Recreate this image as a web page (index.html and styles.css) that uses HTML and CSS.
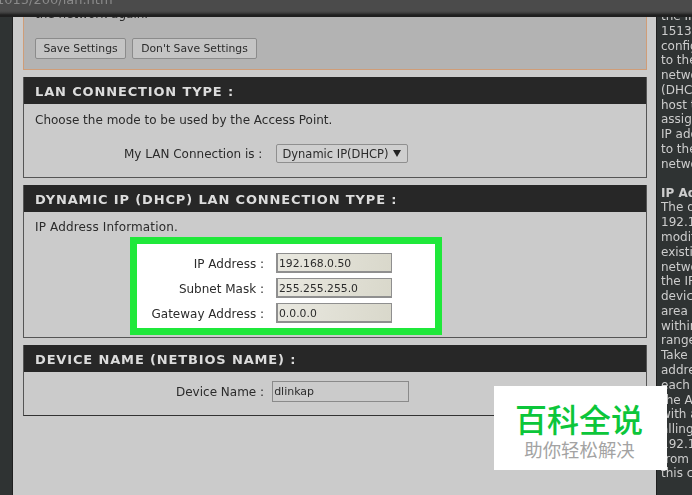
FILE: index.html
```html
<!DOCTYPE html>
<html lang="en">
<head>
<meta charset="utf-8">
<title>LAN settings</title>
<link rel="stylesheet" href="styles.css">
</head>
<body>
<div class="screen">
  <header class="urlbar"><span class="url">1015/200/lan.htm</span></header>
  <div class="workspace">
    <div class="gutter"></div>
    <main class="main">
      <section class="notice">
        <p class="clipped">the network again.</p>
        <div class="buttons">
          <button class="btn btn-save">Save Settings</button>
          <button class="btn btn-nosave">Don't Save Settings</button>
        </div>
      </section>

      <section class="panel panel-lan">
        <h2 class="panel-title">LAN CONNECTION TYPE :</h2>
        <p class="panel-text">Choose the mode to be used by the Access Point.</p>
        <div class="lan-row">
          <span class="label">My LAN Connection is :</span>
          <div class="select"><span>Dynamic IP(DHCP)</span><span class="arrow"></span></div>
        </div>
      </section>

      <section class="panel panel-dhcp">
        <h2 class="panel-title">DYNAMIC IP (DHCP) LAN CONNECTION TYPE :</h2>
        <p class="panel-text">IP Address Information.</p>
        <div class="highlight">
          <span class="label">IP Address :</span><div class="field">192.168.0.50</div>
          <span class="label">Subnet Mask :</span><div class="field">255.255.255.0</div>
          <span class="label">Gateway Address :</span><div class="field">0.0.0.0</div>
        </div>
      </section>

      <section class="panel panel-device">
        <h2 class="panel-title">DEVICE NAME (NETBIOS NAME) :</h2>
        <div class="device-row">
          <span class="label">Device Name :</span>
          <div class="field field-device">dlinkap</div>
        </div>
      </section>
    </main>
    <aside class="help">
      <p class="help-clip">the IP</p>
      <p>1513<br>config<br>to the<br>netwo<br>(DHCP<br>host t<br>assign<br>IP add<br>to the<br>netwo</p>
      <h3>IP Ad</h3>
      <p>The d<br>192.16<br>modif<br>existin<br>netwo<br>the IP<br>device<br>area r<br>within<br>range<br>Take o<br>addre<br>each s<br>the AI<br>with a<br>alling<br>192.16<br>from 1<br>this ca</p>
    </aside>
  </div>
  <div class="watermark">
    <div class="wm-title">百科全说</div>
    <div class="wm-sub">助你轻松解决</div>
  </div>
</div>
</body>
</html>
```

FILE: styles.css
```css
* { box-sizing: border-box; }
html, body { margin: 0; padding: 0; }
body { width: 692px; height: 495px; overflow: hidden; background: #2f3333; }
p, h2, h3 { margin: 0; }

.screen {
  position: relative;
  width: 692px;
  height: 495px;
  overflow: hidden;
  display: flex;
  flex-direction: column;
  font-family: "DejaVu Sans", sans-serif;
  font-size: 12px;
  color: #2b2b2b;
}

.urlbar {
  height: 17px;
  flex: none;
  background: linear-gradient(#4b4b4b 0, #4b4b4b 11px, #3c3c3c 13px, #1f1f1f 15px, #1f1f1f 17px);
  overflow: hidden;
  filter: blur(0.4px);
}
.url { display: block; margin: -8px 0 0 -4px; color: #8a8a8a; font-size: 13px; }

.workspace { flex: 1; display: flex; min-height: 0; filter: blur(0.35px); }
.gutter { width: 13px; flex: none; background: #2f3333; border-right: 1px solid #202020; }

.main {
  width: 643px;
  flex: none;
  background: #cbcbcb;
  padding: 0 9px 0 10px;
  display: flex;
  flex-direction: column;
}

.notice {
  height: 53px;
  flex: none;
  background: #b3b3b3;
  border: 1px solid #cf9d78;
  border-top: 0;
  padding-left: 11px;
  overflow: hidden;
}
.clipped { margin-top: -10px; line-height: 14px; }
.buttons { display: flex; gap: 6px; margin-top: 17px; }
.btn {
  height: 21px;
  padding: 0;
  background: #c4c4c4;
  border: 1px solid #8b8b8b;
  border-radius: 2px;
  font: inherit;
  font-size: 10.8px;
  color: #2b2b2b;
}
.btn-save { width: 91px; }
.btn-nosave { width: 125px; }

.panel {
  flex: none;
  background: #cbcbcb;
  border: 1px solid #555;
  border-top: 0;
}
.panel-lan { margin-top: 7px; height: 101px; }
.panel-dhcp { margin-top: 7px; height: 153px; }
.panel-device { margin-top: 7px; height: 71px; border-bottom-color: #333; }

.panel-title {
  height: 27px;
  background: #272727;
  color: #dcdcdc;
  font-size: 13px;
  font-weight: 700;
  line-height: 29px;
  letter-spacing: 0.85px;
  padding-left: 11px;
  white-space: nowrap;
  overflow: hidden;
}
.panel-text { padding-left: 11px; line-height: 14px; margin-top: 9px; }
.panel-dhcp .panel-text { margin-top: 8px; letter-spacing: 0.15px; }

.label { white-space: nowrap; text-align: right; padding-top: 1px; }

.lan-row {
  display: flex;
  align-items: center;
  margin: 17px 0 0 100px;
  gap: 14px;
}
.select {
  width: 132px;
  height: 19px;
  display: flex;
  align-items: center;
  justify-content: space-between;
  padding: 0 6px 0 5px;
  border: 1px solid #8f8f8f;
  border-radius: 2px;
  background: #cfcfcf;
  font-size: 11.5px;
}
.arrow {
  width: 0;
  height: 0;
  border-left: 4px solid transparent;
  border-right: 4px solid transparent;
  border-top: 7px solid #222;
}

.highlight {
  width: 312px;
  height: 98px;
  margin: 3px 0 0 106px;
  background: #fff;
  border: 7px solid #1fe83a;
  padding: 9px 0 0 0;
  display: grid;
  grid-template-columns: 127px 116px;
  grid-auto-rows: 20px;
  row-gap: 5px;
  column-gap: 12px;
  align-items: center;
}
.highlight .label { justify-self: end; }

.field {
  height: 20px;
  line-height: 19px;
  padding-left: 1px;
  border: 2px solid #8f8f8f;
  border-width: 1px 1px 2px 2px;
  background: linear-gradient(100deg, #e9e8e0, #d9d8cb);
  font-size: 10.8px;
}
.field-device {
  width: 137px;
  height: 21px;
  background: #cbcbcb;
  border: 1px solid #8a8a8a;
  font-size: 11px;
}
.device-row {
  display: flex;
  align-items: center;
  margin: 9px 0 0 152px;
  gap: 8px;
}

.help {
  flex: 1;
  min-width: 0;
  background: #2f3333;
  border-left: 1px solid #1f1f1f;
  padding-left: 4px;
  color: #cdcdcd;
  font-size: 12px;
  line-height: 14.78px;
  white-space: nowrap;
  overflow: hidden;
}
.help-clip { margin-top: -8px; }
.help h3 { font-size: 12px; font-weight: 700; margin-top: 14px; }

.watermark {
  position: absolute;
  left: 494px;
  top: 386px;
  width: 173px;
  height: 84px;
  background: #fff;
  text-align: center;
  font-family: "Noto Sans CJK SC", sans-serif;
}
.wm-title {
  margin-top: 14px;
  padding-right: 3px;
  font-size: 32px;
  line-height: 36px;
  font-weight: 500;
  color: #0cc63a;
}
.wm-sub {
  margin-top: 2px;
  padding-right: 2px;
  font-size: 18.4px;
  line-height: 22px;
  color: #a3a3a3;
}
```
